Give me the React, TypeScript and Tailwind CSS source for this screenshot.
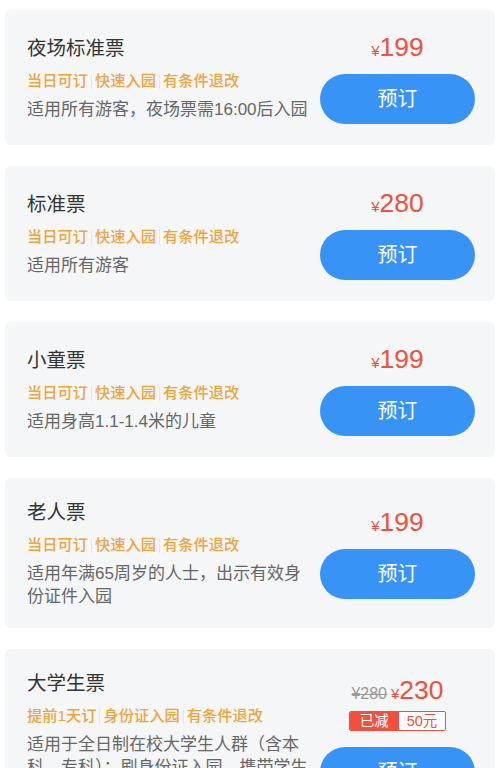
type Ticket = {
  name: string;
  tags: string[];
  desc: string;
  price: number;
  original?: number;
  discount?: number;
};

const tickets: Ticket[] = [
  {
    name: "夜场标准票",
    tags: ["当日可订", "快速入园", "有条件退改"],
    desc: "适用所有游客，夜场票需16:00后入园",
    price: 199,
  },
  {
    name: "标准票",
    tags: ["当日可订", "快速入园", "有条件退改"],
    desc: "适用所有游客",
    price: 280,
  },
  {
    name: "小童票",
    tags: ["当日可订", "快速入园", "有条件退改"],
    desc: "适用身高1.1-1.4米的儿童",
    price: 199,
  },
  {
    name: "老人票",
    tags: ["当日可订", "快速入园", "有条件退改"],
    desc: "适用年满65周岁的人士，出示有效身份证件入园",
    price: 199,
  },
  {
    name: "大学生票",
    tags: ["提前1天订", "身份证入园", "有条件退改"],
    desc: "适用于全日制在校大学生人群（含本科、专科）；刷身份证入园，携带学生证原件核验",
    price: 230,
    original: 280,
    discount: 50,
  },
];

const font = { fontFamily: '"Liberation Sans", "Noto Sans CJK SC", sans-serif' };

function TicketCard({ t }: { t: Ticket }) {
  return (
    <div className="flex min-h-[135px] items-center rounded-md bg-[#f5f6f8] py-[20px] pl-[22px] pr-[20px]">
      {/* left: name, tags, description */}
      <div className="min-w-0 flex-1 pr-[8px]">
        <div className="text-[19.5px] leading-[28px] text-[#333]">{t.name}</div>
        <div className="mt-[8px] flex items-center text-[15.25px] font-medium leading-[22px] text-[#f0a43c]">
          {t.tags.map((tag, i) => (
            <span key={tag} className="flex items-center">
              {i > 0 && <span className="mx-[3px] h-[15px] w-px bg-[#f8e4c4]" />}
              {tag}
            </span>
          ))}
        </div>
        <div className="mt-[6px] text-[17px] leading-[23px] text-[#666]">{t.desc}</div>
      </div>

      {/* right: price + book button */}
      <div className="flex w-[155px] shrink-0 flex-col items-center">
        <div className="flex h-[30px] items-baseline">
          {t.original && (
            <span className="mr-[4px] text-[16px] text-[#999] line-through">¥{t.original}</span>
          )}
          <span className="text-[15px] text-[#f0503c]">¥</span>
          <span className="text-[26.5px] leading-[30px] text-[#f0503c]">{t.price}</span>
        </div>
        {t.discount && (
          <div className="mt-[6px] flex h-[20px] overflow-hidden rounded-[2px] border border-[#f0503c] text-[14.5px] leading-[18px]">
            <span className="bg-[#f0503c] px-[10px] text-white">已减</span>
            <span className="bg-white px-[8px] text-[#f0503c]">{t.discount}元</span>
          </div>
        )}
        <button
          className={`${t.discount ? "mt-[16px]" : "mt-[12px]"} h-[50px] w-[155px] rounded-full bg-[#3893f6] text-[20px] text-white`}
        >
          预订
        </button>
      </div>
    </div>
  );
}

export default function App() {
  return (
    <div className="min-h-[768px] bg-white px-[5px] pt-[10px]" style={font}>
      <div className="flex flex-col gap-[21px]">
        {tickets.map((t) => (
          <TicketCard key={t.name} t={t} />
        ))}
      </div>
    </div>
  );
}
